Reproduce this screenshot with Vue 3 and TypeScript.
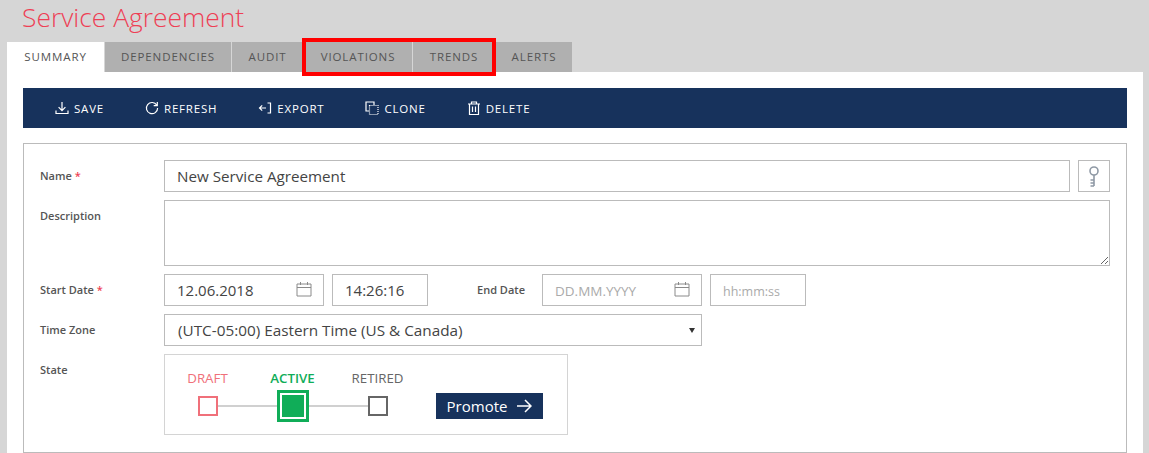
<template>
  <div class="page">
    <h1 class="title">Service Agreement</h1>

    <div class="tabs">
      <div
        v-for="tab in tabs"
        :key="tab.name"
        class="tab"
        :class="{ active: tab.name === activeTab }"
        :style="{ width: tab.width + 'px' }"
      >{{ tab.name }}</div>
      <div class="highlight"></div>
    </div>

    <div class="sheet">
      <div class="toolbar">
        <button class="tool"><svg viewBox="0 0 14 14"><path d="M7 1v8.500M3.600 6.200 7 9.600l3.400-3.400M1 9.500v3h12v-3" /></svg>SAVE</button>
        <button class="tool"><svg viewBox="0 0 14 14"><path d="M11.800 4.200A5.600 5.600 0 1 0 12.600 7M12.300 1v3.600H8.700" /></svg>REFRESH</button>
        <button class="tool"><svg viewBox="0 0 14 14"><path d="M9.500 2h3v10h-3M8 7H1.500M4.200 4.300 1.500 7l2.700 2.700" /></svg>EXPORT</button>
        <button class="tool"><svg viewBox="0 0 14 14"><path d="M9 4V1H1v9h3" /><path d="M4.500 4.500h8.500v9H4.500z" stroke-dasharray="1 1" /></svg>CLONE</button>
        <button class="tool"><svg viewBox="0 0 14 14"><path d="M1 3h12M4.500 3V1h5v2M2.500 3v10.500h9V3M5.500 5.500v5.500M8.500 5.500v5.500" /></svg>DELETE</button>
      </div>

      <form class="form" @submit.prevent>
        <div class="row">
          <label class="label">Name <span class="req">*</span></label>
          <input class="field grow name" value="New Service Agreement" />
          <button class="key" type="button">
            <svg viewBox="0 0 14 24" width="14" height="24">
              <circle cx="7" cy="7" r="4" />
              <path d="M7 11v11M7 16H3.500M7 19H3.500M7 22H3.500" />
            </svg>
          </button>
        </div>

        <div class="row">
          <label class="label">Description</label>
          <textarea class="field grow area"></textarea>
        </div>

        <div class="row">
          <label class="label">Start Date <span class="req">*</span></label>
          <div class="date">
            <input class="field wide" value="12.06.2018" />
            <svg class="cal" viewBox="0 0 16 16" width="16" height="16"><path d="M1 3h14v12H1zM1 6.500h14M4.500 1v3M11.500 1v3" /></svg>
          </div>
          <input class="field narrow" value="14:26:16" />
          <label class="label end">End Date</label>
          <div class="date">
            <input class="field wide" placeholder="DD.MM.YYYY" />
            <svg class="cal" viewBox="0 0 16 16" width="16" height="16"><path d="M1 3h14v12H1zM1 6.500h14M4.500 1v3M11.500 1v3" /></svg>
          </div>
          <input class="field narrow small" placeholder="hh:mm:ss" />
        </div>

        <div class="row">
          <label class="label">Time Zone</label>
          <div class="zone">
            <select class="field select">
              <option>(UTC-05:00) Eastern Time (US &amp; Canada)</option>
            </select>
            <span class="caret"></span>
          </div>
        </div>

        <div class="row">
          <label class="label">State</label>
          <div class="state">
            <div class="steps">
              <div class="line"></div>
              <div v-for="s in states" :key="s.name" class="step" :class="s.cls">
                <span class="step-name">{{ s.name }}</span>
                <span class="box"></span>
              </div>
            </div>
            <button class="promote" type="button">
              Promote
              <svg viewBox="0 0 16 14" width="16" height="14"><path d="M1 7h14M9 1l6 6-6 6" /></svg>
            </button>
          </div>
        </div>
      </form>
    </div>
  </div>
</template>

<script setup lang="ts">
const tabs = [
  { name: 'SUMMARY', width: 97 },
  { name: 'DEPENDENCIES', width: 126 },
  { name: 'AUDIT', width: 71 },
  { name: 'VIOLATIONS', width: 108 },
  { name: 'TRENDS', width: 82 },
  { name: 'ALERTS', width: 76 },
];
const activeTab = 'SUMMARY';

const states = [
  { name: 'DRAFT', cls: 'draft' },
  { name: 'ACTIVE', cls: 'on' },
  { name: 'RETIRED', cls: 'retired' },
];
</script>

<style>
html, body {
  margin: 0;
  background: #d6d6d6;
}
</style>

<style scoped>
.page {
  height: 453px;
  overflow: hidden;
  padding: 0 6px 0 7px;
  font-family: "Open Sans", "Noto Sans", sans-serif;
  color: #444;
}

.title {
  margin: 0 0 0 15px;
  height: 42px;
  font-size: 26.4px;
  line-height: 35px;
  font-weight: 300;
  color: #ee3f55;
}

.tabs {
  position: relative;
  display: flex;
  gap: 1px;
  height: 30px;
}

.tab {
  box-sizing: border-box;
  background: #b0b0b0;
  font-size: 11.5px;
  line-height: 30px;
  letter-spacing: 0.9px;
  text-align: center;
  color: #555;
}

.tab.active {
  background: #fff;
}

/* red callout round violations and trends */
.highlight {
  position: absolute;
  left: 295px;
  top: -4px;
  width: 186px;
  height: 30px;
  border: 4px solid #f00;
}

.sheet {
  background: #fff;
  padding: 16px;
}

.toolbar {
  display: flex;
  gap: 41px;
  height: 40px;
  padding-left: 32px;
  background: #17325c;
}

.tool {
  display: flex;
  align-items: center;
  gap: 5px;
  padding: 0;
  border: 0;
  background: none;
  color: #fff;
  font: 500 11.5px "Open Sans", sans-serif;
  letter-spacing: 0.8px;
}

.tool svg {
  width: 14px;
  height: 14px;
  fill: none;
  stroke: #fff;
  stroke-width: 1.2;
}

.form {
  display: flex;
  flex-direction: column;
  gap: 8px;
  margin-top: 15px;
  padding: 16px 16px 17px;
  border: 1px solid #bbb;
}

.row {
  display: flex;
  align-items: flex-start;
  gap: 8px;
}

.label {
  flex: none;
  width: 116px;
  height: 32px;
  font-size: 11px;
  font-weight: 600;
  line-height: 32px;
  color: #555;
}

.req {
  color: #ee3f55;
}

.field {
  box-sizing: border-box;
  height: 32px;
  margin: 0;
  padding: 0 12px;
  border: 1px solid #bbb;
  border-radius: 0;
  outline: 0;
  background: #fff;
  font: 15px "Open Sans", sans-serif;
  color: #444;
}

.field::placeholder {
  color: #aaa;
  font-size: 13.5px;
}

.small::placeholder {
  font-size: 12.5px;
}

.name {
  font-size: 15.2px;
}

.grow {
  flex: 1;
  min-width: 0;
}

.area {
  height: 66px;
}

.key {
  box-sizing: border-box;
  width: 32px;
  height: 32px;
  padding: 3px 0 0;
  border: 1px solid #bbb;
  background: #fff;
}

.key svg {
  fill: none;
  stroke: #8f99a5;
  stroke-width: 1.6;
}

.date {
  position: relative;
  flex: none;
  height: 32px;
}

.wide {
  width: 160px;
}

.narrow {
  width: 96px;
}

.cal {
  position: absolute;
  right: 12px;
  top: 7px;
  fill: none;
  stroke: #8a8a8a;
}

.end {
  width: 57px;
  margin-left: 41px;
}

.zone {
  position: relative;
}

.select {
  width: 538px;
  padding-left: 13px;
  font-size: 15.3px;
  appearance: none;
}

.caret {
  position: absolute;
  right: 7px;
  top: 14px;
  border: 3px solid transparent;
  border-top: 5px solid #333;
  border-bottom: 0;
}

.state {
  box-sizing: border-box;
  display: flex;
  align-items: flex-start;
  justify-content: space-between;
  width: 404px;
  height: 81px;
  padding: 14px 24px 0 0;
  border: 1px solid #d4d4d4;
}

.steps {
  position: relative;
  display: grid;
  grid-template-columns: repeat(3, 85px);
}

.line {
  position: absolute;
  left: 42px;
  right: 42px;
  top: 36px;
  height: 2px;
  background: #d0d0d0;
}

.step {
  position: relative;
  display: flex;
  flex-direction: column;
  align-items: center;
  gap: 4px;
}

.step-name {
  font-size: 13.3px;
  line-height: 18px;
}

.box {
  box-sizing: border-box;
  width: 20px;
  height: 20px;
  margin-top: 5px;
  border: 2px solid;
  background: #fff;
}

.draft {
  color: #f0707a;
}

.retired {
  color: #666;
}

.on {
  color: #10ad58;
}

.on .step-name {
  font-weight: 600;
}

.on .box {
  width: 32px;
  height: 32px;
  margin-top: -1px;
  border-width: 3px;
  background: #10ad58;
  box-shadow: inset 0 0 0 2px #fff;
}

.promote {
  display: flex;
  align-items: center;
  justify-content: center;
  gap: 9px;
  width: 107px;
  height: 26px;
  margin-top: 24px;
  padding: 0;
  border: 0;
  background: #17325c;
  color: #fff;
  font: 15px "Open Sans", sans-serif;
}

.promote svg {
  fill: none;
  stroke: #fff;
  stroke-width: 1.5;
}
</style>
